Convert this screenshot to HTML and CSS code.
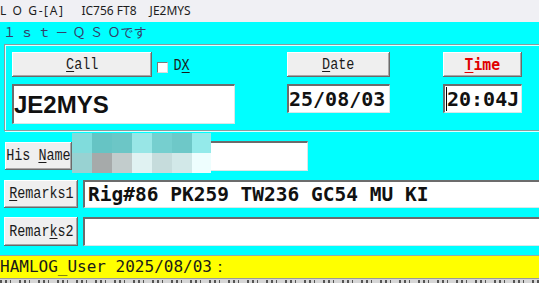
FILE: index.html
```html
<!DOCTYPE html>
<html>
<head>
<meta charset="utf-8">
<link rel="stylesheet" href="styles.css">
</head>
<body>
<div class="titlebar"><span class="t1">L O G-[A]</span><span class="t2">IC756 FT8</span><span class="t3">JE2MYS</span></div>
<div class="banner"><span class="wide">１ｓｔ－ＱＳ</span><span>Ｏです</span></div>
<div class="frame">
  <div class="col col-call">
    <div class="row-top">
      <div class="btn btn-call"><span class="lbl"><u>C</u>all</span></div>
      <span class="chk"></span>
      <span class="dx"><span class="lbl">D<u>X</u></span></span>
    </div>
    <div class="field field-call">JE2MYS</div>
  </div>
  <div class="col col-date">
    <div class="btn"><span class="lbl"><u>D</u>ate</span></div>
    <div class="field field-date">25/08/03</div>
  </div>
  <div class="col col-time">
    <div class="btn btn-time"><span class="lbl"><u>T</u>ime</span></div>
    <div class="field field-time"><span class="caret"></span>20:04J</div>
  </div>
</div>
<div class="row row-name">
  <div class="btn btn-name"><span class="lbl">His <u>N</u>ame</span></div>
  <div class="field field-name"></div>
  <div class="mosaic">
    <i class="m1"></i><i class="m2"></i><i class="m3"></i><i class="m4"></i><i class="m5"></i><i class="m6"></i><i class="m7"></i>
    <i class="n1"></i><i class="n2"></i><i class="n3"></i><i class="n4"></i><i class="n5"></i><i class="n6"></i><i class="n7"></i>
  </div>
</div>
<div class="row row-rem1">
  <div class="btn btn-rem"><span class="lbl"><u>R</u>emarks1</span></div>
  <div class="field field-rem">Rig#86 PK259 TW236 GC54 MU KI</div>
</div>
<div class="row row-rem2">
  <div class="btn btn-rem"><span class="lbl">Remar<u>k</u>s2</span></div>
  <div class="field field-rem"></div>
</div>
<div class="status">HAMLOG_User 2025/08/03：</div>
<div class="grid"></div>
</body>
</html>
```
FILE: styles.css
```css
html, body {
  margin: 0;
  padding: 0;
}
body {
  background: #00ffff;
  width: 539px;
  height: 283px;
  overflow: hidden;
  font-family: "DejaVu Sans Mono", monospace;
  color: #111;
}
.titlebar {
  height: 22px;
  background: #f0f0f4;
  font-family: "Noto Sans", sans-serif;
  font-size: 12px;
  color: #1c1c1c;
  display: flex;
  align-items: center;
  white-space: pre;
  padding-bottom: 1px;
  box-sizing: border-box;
}
.t1 { letter-spacing: 1.6px; }
.t2 { margin-left: 17px; }
.t3 { margin-left: 13px; }

.banner {
  height: 22px;
  box-sizing: border-box;
  padding: 1px 0 0 3px;
  font-family: "Noto Sans CJK JP", sans-serif;
  font-weight: 400;
  font-size: 13px;
  line-height: 17px;
  color: #34406a;
  white-space: pre;
}
.wide { letter-spacing: 4.4px; }

.frame {
  margin-left: 4px;
  width: 560px;
  height: 87px;
  box-sizing: border-box;
  border: 1px solid #8a9c9c;
  box-shadow: inset 1px 1px 0 #dfffff, 1px 1px 0 #dfffff;
  padding: 7px 0 0 7px;
  display: flex;
}
.col {
  display: flex;
  flex-direction: column;
  gap: 7px;
}
.col-call { width: 223px; }
.col-date { width: 103px; margin-left: 52px; }
.col-time { width: 79px; margin-left: 53px; }

.row-top {
  display: flex;
  align-items: center;
  height: 25px;
}

.btn {
  height: 25px;
  box-sizing: border-box;
  background: #efefef;
  box-shadow: inset -1px -1px 0 #6a6a6a, inset 1px 1px 0 #ffffff, inset -2px -2px 0 #a8a8a8;
  display: flex;
  align-items: center;
  justify-content: center;
  font-family: "Liberation Mono", monospace;
  font-size: 16px;
  color: #1a1a1a;
  white-space: pre;
  flex: none;
}
.lbl {
  display: inline-block;
  transform: scaleX(0.84);
}
.lbl u {
  text-decoration-thickness: 1px;
  text-underline-offset: 2px;
}
.btn-call { width: 140px; }
.btn-time {
  color: #e00000;
  font-family: "DejaVu Sans Mono", monospace;
  font-weight: bold;
  font-size: 16px;
}
.btn-time .lbl { transform: scaleX(0.92); }
.chk {
  width: 11px;
  height: 11px;
  box-sizing: border-box;
  background: #fff;
  border: 1px solid #7a7a7a;
  border-right-color: #dcdcdc;
  border-bottom-color: #dcdcdc;
  margin-left: 5px;
  margin-top: 5px;
}
.dx {
  margin-left: 4px;
  font-family: "Liberation Mono", monospace;
  font-size: 16px;
  color: #1a1a1a;
  margin-top: 2px;
}

.field {
  box-sizing: border-box;
  background: #fff;
  border-top: 2px solid #6c6c6c;
  border-left: 2px solid #6c6c6c;
  border-right: 1px solid #d8e8e8;
  border-bottom: 1px solid #d8e8e8;
  display: flex;
  align-items: center;
  white-space: pre;
  flex: none;
}
.field-call {
  height: 40px;
  font-family: "Liberation Sans", sans-serif;
  font-weight: bold;
  font-size: 24px;
  padding-top: 1px;
  color: #111;
}
.field-date, .field-time {
  height: 29px;
  font-family: "DejaVu Sans Mono", monospace;
  font-weight: bold;
  font-size: 20px;
  color: #111;
}
.field-time { padding-left: 1px; }
.caret {
  width: 1px;
  height: 24px;
  background: #000;
}

.row {
  display: flex;
  align-items: center;
  position: relative;
}
.row-name {
  margin-top: 10px;
  height: 30px;
  padding-left: 5px;
}
.btn-name { width: 67px; height: 28px; }
.field-name { width: 236px; height: 30px; }

.row-rem1 {
  margin-top: 9px;
  height: 28px;
  padding-left: 4px;
}
.row-rem2 {
  margin-top: 9px;
  height: 29px;
  padding-left: 4px;
}
.btn-rem { width: 74px; height: 100%; }
.field-rem {
  margin-left: 5px;
  width: 480px;
  height: 100%;
  padding-left: 3px;
  font-family: "DejaVu Sans Mono", monospace;
  font-weight: bold;
  font-size: 19.5px;
  color: #111;
}

.mosaic {
  position: absolute;
  left: 72px;
  top: -8px;
  width: 139px;
  height: 40px;
  display: grid;
  grid-template-columns: 20px 20px 20px 20px 20px 20px 19px;
  grid-template-rows: 20px 20px;
}
.mosaic i { display: block; }
.m1 { background: #80dcdc; }
.m2 { background: #66c4c4; }
.m3 { background: #6cc6c6; }
.m4 { background: #98e6e6; }
.m5 { background: #76cfcf; }
.m6 { background: #6ec8c8; }
.m7 { background: #94eaea; }
.n1 { background: #98d2d2; }
.n2 { background: #a6aaaa; }
.n3 { background: #c2cccc; }
.n4 { background: #e0f2f2; }
.n5 { background: #c6dcdc; }
.n6 { background: #d2e8e8; }
.n7 { background: #eefefe; }

.status {
  margin-top: 9px;
  height: 24px;
  box-sizing: border-box;
  border-top: 1px solid #9aa8a8;
  border-bottom: 1px solid #9a9a9a;
  background: #ffff00;
  font-family: "DejaVu Sans Mono", monospace;
  font-size: 16px;
  line-height: 22px;
  color: #1a1a1a;
  white-space: pre;
}
.grid {
  height: 10px;
  background-color: #d6d6d6;
  background-image: repeating-linear-gradient(90deg, #555 0 2px, transparent 2px 5px, #555 5px 7px, transparent 7px 10px, #555 10px 11px, transparent 11px 19px);
  background-size: 100% 3px;
  background-repeat: no-repeat;
  background-position: 0 1px;
}
```
